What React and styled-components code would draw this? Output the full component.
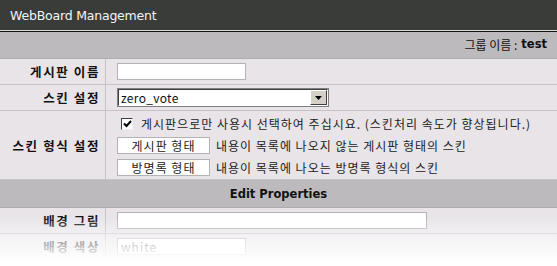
import React from "react";
import styled, { createGlobalStyle } from "styled-components";

const GlobalStyle = createGlobalStyle`
  html, body {
    margin: 0;
    padding: 0;
    background: #ffffff;
  }
  body {
    font-family: "Noto Sans CJK KR", "DejaVu Sans", sans-serif;
    font-size: 12px;
    color: #111;
  }
`;

export default function App() {
  return (
    <Page>
      <GlobalStyle />
      <TitleBar>WebBoard Management</TitleBar>
      <GroupBar>
        그룹 이름 : <b>test</b>
      </GroupBar>

      <Row>
        <Label>게시판 이름</Label>
        <Value>
          <TextBox $w={129} />
        </Value>
      </Row>

      <Row>
        <Label>스킨 설정</Label>
        <Value>
          <FakeSelect>
            <span>zero_vote</span>
            <SelectButton>
              <svg width="7" height="4" viewBox="0 0 7 4">
                <path d="M0 0 L7 0 L3.5 4 Z" fill="#000" />
              </svg>
            </SelectButton>
          </FakeSelect>
        </Value>
      </Row>

      <Row $h={69}>
        <Label>스킨 형식 설정</Label>
        <Value $stack>
          <Line $indent={4}>
            <CheckBox>
              <svg width="9" height="8" viewBox="0 0 9 8">
                <path d="M1 3.5 L3.5 6 L8 1" stroke="#000" strokeWidth="2" fill="none" />
              </svg>
            </CheckBox>
            게시판으로만 사용시 선택하여 주십시요. (스킨처리 속도가 향상됩니다.)
          </Line>
          <Line>
            <TextBox $w={93} $center>게시판 형태</TextBox>
            내용이 목록에 나오지 않는 게시판 형태의 스킨
          </Line>
          <Line>
            <TextBox $w={93} $center>방명록 형태</TextBox>
            내용이 목록에 나오는 방명록 형식의 스킨
          </Line>
        </Value>
      </Row>

      <SectionBar>Edit Properties</SectionBar>

      <Row>
        <Label>배경 그림</Label>
        <Value>
          <TextBox $w={310} />
        </Value>
      </Row>

      <Row>
        <Label>배경 색상</Label>
        <Value>
          <TextBox $w={129} $muted>white</TextBox>
        </Value>
      </Row>

      <Fade />
    </Page>
  );
}

const Page = styled.div`
  position: relative;
  width: 557px;
  height: 266px;
  overflow: hidden;
  background: #e8e4e8;
`;

const TitleBar = styled.div`
  height: 31px;
  box-sizing: border-box;
  padding: 0 10px;
  display: flex;
  align-items: center;
  background: #3a3c39;
  color: #f4f4f4;
  font-family: "DejaVu Sans", sans-serif;
  font-size: 12.5px;
  letter-spacing: -0.2px;
  border-bottom: 1px solid #d8d8d8;
  box-shadow: 0 1px 0 #151515;
  margin-bottom: 1px;
`;

const GroupBar = styled.div`
  height: 27px;
  box-sizing: border-box;
  display: flex;
  align-items: center;
  justify-content: flex-end;
  padding: 0 10px 2px 0;
  background: #bcbabc;
  border-bottom: 1px solid #aeacae;
  font-size: 12px;
  color: #111;
  b {
    margin-left: 4px;
    font-family: "DejaVu Sans", sans-serif;
    font-weight: bold;
    font-size: 11.5px;
  }
`;

const Row = styled.div`
  display: grid;
  grid-template-columns: 106px 1fr;
  height: ${(p) => p.$h || 26}px;
  box-sizing: border-box;
  border-bottom: 1px solid #c6c2c6;
  background: #e8e4e8;
`;

const Label = styled.div`
  display: flex;
  align-items: center;
  justify-content: flex-end;
  padding-right: 5px;
  border-right: 1px solid #c6c2c6;
  font-weight: bold;
  font-size: 12.5px;
  color: #111;
  letter-spacing: 1.6px;
`;

const Value = styled.div`
  display: flex;
  flex-direction: ${(p) => (p.$stack ? "column" : "row")};
  justify-content: ${(p) => (p.$stack ? "center" : "flex-start")};
  align-items: ${(p) => (p.$stack ? "flex-start" : "center")};
  gap: ${(p) => (p.$stack ? "5px" : "0")};
  padding-left: 11px;
  padding-top: ${(p) => (p.$stack ? "1px" : "0")};
`;

const Line = styled.div`
  display: flex;
  align-items: center;
  gap: 6px;
  padding-left: ${(p) => p.$indent || 0}px;
  font-size: 12px;
  color: #222;
  letter-spacing: 1px;
  white-space: nowrap;
`;

const TextBox = styled.div`
  width: ${(p) => p.$w}px;
  height: 17px;
  box-sizing: border-box;
  background: #ffffff;
  border: 1px solid #b4b2b4;
  display: flex;
  align-items: center;
  justify-content: ${(p) => (p.$center ? "center" : "flex-start")};
  padding-left: ${(p) => (p.$center ? 0 : 3)}px;
  font-size: 12px;
  color: ${(p) => (p.$muted ? "#666" : "#222")};
  letter-spacing: 1px;
`;

const FakeSelect = styled.div`
  width: 212px;
  height: 19px;
  box-sizing: border-box;
  display: flex;
  align-items: stretch;
  justify-content: space-between;
  background: #fff;
  border: 2px solid;
  border-color: #404040 #ffffff #ffffff #404040;
  outline: 1px solid #808080;
  outline-offset: -1px;
  span {
    display: flex;
    align-items: center;
    padding-left: 2px;
    font-size: 12px;
    letter-spacing: 0.3px;
  }
`;

const SelectButton = styled.div`
  width: 15px;
  display: flex;
  align-items: center;
  justify-content: center;
  background: #d4d0c8;
  border: 1px solid;
  border-color: #ffffff #404040 #404040 #ffffff;
`;

const CheckBox = styled.span`
  width: 12px;
  height: 12px;
  box-sizing: border-box;
  display: inline-flex;
  align-items: center;
  justify-content: center;
  background: #fff;
  border: 1px solid;
  border-color: #404040 #f0f0f0 #f0f0f0 #404040;
  margin-right: 2px;
`;

const SectionBar = styled.div`
  height: 28px;
  box-sizing: border-box;
  display: flex;
  align-items: center;
  justify-content: center;
  background: #bcbabc;
  border-bottom: 1px solid #aeacae;
  font-family: "DejaVu Sans", sans-serif;
  font-weight: bold;
  font-size: 11.5px;
  color: #111;
`;

const Fade = styled.div`
  position: absolute;
  left: 0;
  right: 0;
  top: 216px;
  bottom: 0;
  pointer-events: none;
  background: linear-gradient(
    to bottom,
    rgba(255, 255, 255, 0) 0%,
    rgba(255, 255, 255, 0.55) 45%,
    rgba(255, 255, 255, 0.97) 85%,
    #ffffff 100%
  );
`;
